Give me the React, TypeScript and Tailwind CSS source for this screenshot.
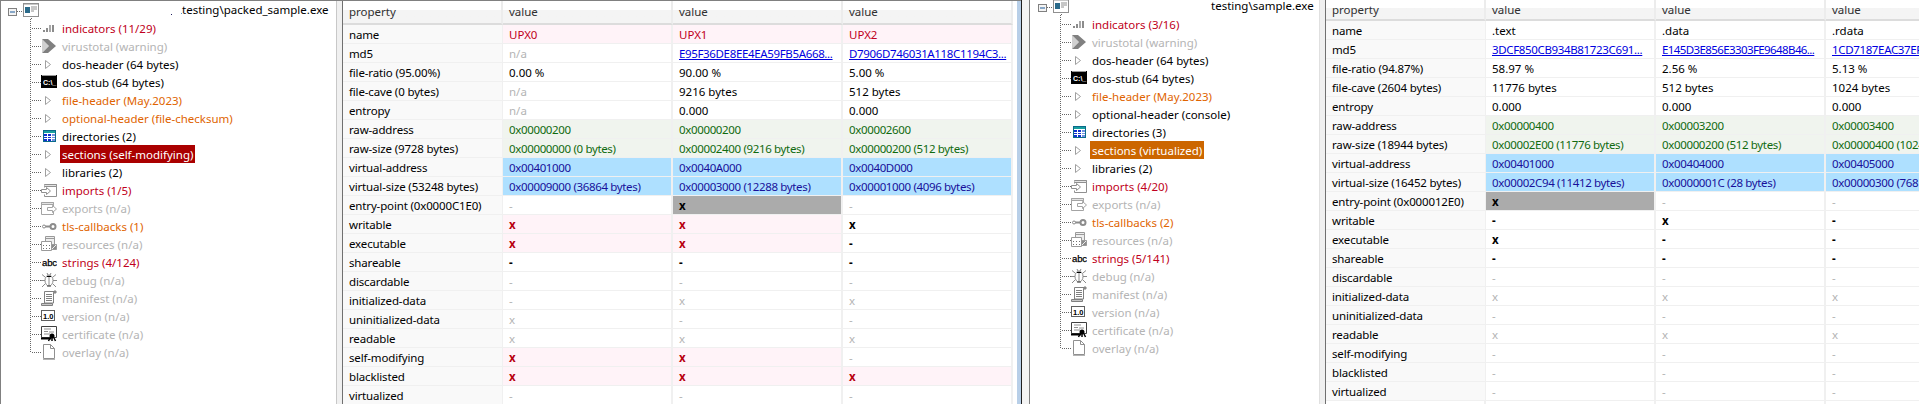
import type { ReactNode } from 'react';

type Tone = 'plain' | 'muted' | 'red' | 'orange';

const toneClass: Record<Tone, string> = {
  plain: 'text-black',
  muted: 'text-[#b4b4b4]',
  red: 'text-[#c00020]',
  orange: 'text-[#e06400]',
};

// icons, all 16x16 and drawn to sit after the dotted connector
const Bars = () => (
  <svg width="16" height="16" fill="#8c8c8c">
    <rect x="2" y="10" width="2" height="2" />
    <rect x="5" y="8" width="2" height="4" />
    <rect x="8" y="5" width="2" height="7" fill="#a8a8a8" />
    <rect x="11" y="5" width="2" height="7" />
  </svg>
);

const Virustotal = () => (
  <svg width="16" height="16">
    <polygon points="1,1 1,15 8,8" fill="#d0d0d0" />
    <polygon points="1,1 7,1 15,8 7,15 1,15 8,8" fill="#808080" />
  </svg>
);

const Arrow = () => (
  <svg width="16" height="16">
    <polygon points="4.5,4.5 9.5,8.5 4.5,12.5" fill="#fff" stroke="#a0a0a0" />
  </svg>
);

const Console = () => (
  <svg width="16" height="16">
    <rect x="0" y="1" width="16" height="13" fill="#000" />
    <rect x="1" y="1" width="14" height="1" fill="#9a9a9a" />
    <text x="2" y="11" fontSize="7" fontWeight="bold" fill="#fff" fontFamily="'Liberation Sans', sans-serif">
      C:\_
    </text>
  </svg>
);

const Directories = () => (
  <svg width="16" height="16">
    <rect x="2.5" y="2.5" width="12" height="11" fill="#fff" stroke="#0a6a8a" />
    <rect x="3" y="3" width="11" height="2" fill="#18a0a0" />
    <rect x="3" y="6" width="3" height="7" fill="#1030d0" />
    <rect x="7" y="6" width="3" height="7" fill="#1030d0" />
    <rect x="11" y="6" width="3" height="7" fill="#7090e0" />
    <path d="M3 8.5h11M3 10.5h11" stroke="#fff" />
  </svg>
);

const Imports = () => (
  <svg width="16" height="16" fill="none" stroke="#909090">
    <path d="M3.5 5.5v-3h12v12h-12v-2" />
    <path d="M3.5 2.5h12v2h-12" fill="#e4e4e4" />
    <path d="M0.5 7.5h5v-2l4 3.5-4 3.5v-2h-5z" fill="#fff" />
  </svg>
);

const Exports = () => (
  <svg width="16" height="16" fill="none" stroke="#a4a4a4">
    <path d="M0.5 2.5h12v12h-12z" fill="#fff" />
    <path d="M0.5 2.5h12v2h-12z" fill="#e4e4e4" />
    <path d="M6.5 7.5h5v-2l4 3.5-4 3.5v-2h-5z" fill="#fff" />
  </svg>
);

const Key = () => (
  <svg width="16" height="16" fill="none" stroke="#8c8c8c">
    <circle cx="12" cy="8.5" r="2.5" strokeWidth="2" />
    <path d="M2 8.5h7" strokeWidth="2" />
    <circle cx="3" cy="8.5" r="1.5" fill="#fff" />
  </svg>
);

const Resources = () => (
  <svg width="16" height="16" fill="none" stroke="#9a9a9a">
    <path d="M4.5 0.5h9v9h-9z" fill="#eee" />
    <path d="M4.5 2.5h9" />
    <path d="M0.5 5.5h10v9h-10z" fill="#fff" />
    <path d="M2 9.5h1M5 9.5h1M8 9.5h1M2 12.5h1M5 12.5h1M8 12.5h1" stroke="#707070" />
    <path d="M10.5 8.5h5v5h-5z" fill="#8c8c8c" />
    <path d="M11 13l4-4" stroke="#eee" />
  </svg>
);

const Strings = () => (
  <svg width="16" height="16">
    <text x="1" y="12" fontSize="9.5" fill="#000" stroke="#000" strokeWidth="0.25" fontFamily="'Liberation Sans', sans-serif" textLength="15">
      abc
    </text>
  </svg>
);

const Bug = () => (
  <svg width="16" height="16" fill="none" stroke="#8a8a8a">
    <ellipse cx="8" cy="8.5" rx="4" ry="5.5" fill="#fff" />
    <path d="M8 3v11M6 1l1 2M10 1L9 3M4 5L1 2.5M12 5l3-2.500M4 8.500H0M12 8.500h4M4 12l-3 3M12 12l3 3" />
    <path d="M6 4.500h4" stroke="#000" />
    <path d="M6 14h4" stroke="#444" />
  </svg>
);

const Manifest = () => (
  <svg width="16" height="16" fill="none" stroke="#808080">
    <path d="M3.500 1.500h11l-2 1v10.500h-9z" fill="#fff" />
    <path d="M0.500 13.500h11v2h-11z" fill="#c8c8c8" />
    <path d="M5 4.500h6M5 6.500h6M5 8.500h6M5 10.500h6" />
    <path d="M13 1h2v2h-2z" fill="#a0a0a0" />
  </svg>
);

const Version = () => (
  <svg width="16" height="16">
    <rect x="0.500" y="2.500" width="13" height="10" fill="#fff" stroke="#606060" />
    <text x="2" y="10.500" fontSize="7.500" fontWeight="bold" fill="#000" fontFamily="'Liberation Sans', sans-serif">
      1.0
    </text>
  </svg>
);

const Certificate = () => (
  <svg width="16" height="16" fill="none">
    <path d="M0.500 0.500h15v11h-15z" fill="#fff" stroke="#404040" />
    <path d="M3 3h7M3 5.500h4M8 6h5M3 8h6" stroke="#909090" />
    <path d="M0 12.500h10" stroke="#000" strokeWidth="2" />
    <circle cx="11" cy="10" r="2.500" fill="#000" />
    <path d="M9 12l-1.500 3M13 12l1.500 3M11 12v3" stroke="#000" strokeWidth="1.500" />
  </svg>
);

const Page = () => (
  <svg width="16" height="16" fill="none" stroke="#909090">
    <path d="M2.500 0.500h7l4 4v10h-11z" fill="#fff" />
    <path d="M9.500 0.500v4h4" />
    <path d="M2 15.500h12" stroke="#b4b4b4" />
  </svg>
);

const WindowGlyph = () => (
  <svg width="38" height="18" className="shrink-0">
    <rect x="7.500" y="7.500" width="8" height="7" fill="#f4f4f4" stroke="#808080" />
    <path d="M9 11h5" stroke="#1a5a9a" />
    <path d="M16 10.500h6" stroke="#666" strokeDasharray="1 1" />
    <path d="M30.500 15v3" stroke="#666" strokeDasharray="1 1" />
    <rect x="22.500" y="2.500" width="15" height="13" fill="#fff" stroke="#909090" />
    <rect x="24" y="6" width="5" height="6" fill="#2a6a8a" />
    <path d="M30 6h6M30 8h6M30 10h3" stroke="#909090" />
    <path d="M23 3.500h14" stroke="#c8c8c8" />
  </svg>
);

type Node = { label: string; tone: Tone; icon: ReactNode; picked?: string };

const TreeRow = ({ node, last }: { node: Node; last: boolean }) => (
  <div className="flex h-[18px] items-center pl-[29px]">
    <svg width="11" height="18" className="shrink-0">
      <path d={last ? 'M0.500 0v9.500' : 'M0.500 0v18'} stroke="#666" strokeDasharray="1 1" />
      <path d="M2 9.500h9" stroke="#666" strokeDasharray="1 1" />
    </svg>
    <span className="w-[19px] shrink-0">{node.icon}</span>
    <span className={`px-[2px] pt-[2px] leading-[16px] whitespace-nowrap ${node.picked ? node.picked + ' text-white' : toneClass[node.tone]}`}>
      {node.label}
    </span>
  </div>
);

const TreeView = ({ title, specks, nodes, className }: { title: string; specks?: boolean; nodes: Node[]; className: string }) => (
  <div className={`shrink-0 overflow-hidden bg-white ${className}`}>
    <div className="flex h-[18px] items-center">
      <WindowGlyph />
      {specks ? (
        <span className="ml-[132px] flex items-center">
          <span className="mt-[9px] h-[1px] w-[1px] bg-[#202060]" />
          <span className="mt-[7px] ml-[9px] h-[1px] w-[1px] bg-[#5090d0]" />
        </span>
      ) : (
        <span className="ml-[142px]" />
      )}
      <span className="whitespace-nowrap text-black">{title}</span>
    </div>
    {nodes.map((node, i) => (
      <TreeRow key={node.label} node={node} last={i === nodes.length - 1} />
    ))}
  </div>
);

type CellKind = 'plain' | 'muted' | 'bad' | 'link' | 'linkTight' | 'raw' | 'virt' | 'flagBad' | 'flagGray' | 'flagBlack' | 'dash' | 'faint';

const cellClass: Record<CellKind, string> = {
  plain: 'text-black',
  muted: 'text-[#b4b4b4]',
  bad: 'bg-[#fff3f8] text-[#c00020]',
  link: 'text-[#0000e0] underline tracking-[-0.35px]',
  linkTight: 'text-[#0000e0] underline tracking-[-0.6px]',
  raw: 'bg-[#f0f4ee] text-[#106a10] tracking-[-0.35px]',
  virt: 'bg-[#aee0ff] text-[#18109a] tracking-[-0.35px]',
  flagBad: 'bg-[#fff3f8] font-bold text-[#b80010]',
  flagGray: 'bg-[#ababab] font-bold text-black',
  flagBlack: 'font-bold text-black',
  dash: 'font-bold text-black',
  faint: 'text-[#b4b4b4]',
};

type Row = { prop: string; cells: [string, CellKind][] };

const same = (text: string, kind: CellKind): [string, CellKind][] => [
  [text, kind],
  [text, kind],
  [text, kind],
];

const Grid = ({ rows, headClass, tail }: { rows: Row[]; headClass: string; tail?: boolean }) => (
  <div className="grid w-max grid-cols-[160px_170px_170px_170px]">
    {['property', 'value', 'value', 'value'].map((head, i) => (
      <div
        key={i}
        className={`flex items-center border-r-2 border-b-2 border-r-[#ececec] border-b-[#dcdcdc] bg-gradient-to-b from-white from-40% to-[#f4f4f4] to-40% px-[6px] text-[#303030] ${headClass}`}
      >
        {head}
      </div>
    ))}
    {rows.map((row) => (
      <div key={row.prop} className="contents">
        <div className="flex h-[19px] items-center border-r border-b border-[#f0f0f0] bg-[#f9f9f9] px-[6px] pt-[2px] tracking-[-0.15px] whitespace-nowrap text-black">
          {row.prop}
        </div>
        {row.cells.map(([text, kind], i) => (
          <div
            key={i}
            className={`flex h-[19px] items-center overflow-hidden border-r-2 border-b border-[#f0f0f0] pt-[2px] pl-[6px] whitespace-nowrap ${cellClass[kind]}`}
          >
            {text}
          </div>
        ))}
      </div>
    ))}
    {tail &&
      [0, 1, 2, 3].map((i) => <div key={i} className="h-[3px] border-r-2 border-[#f0f0f0] first:bg-[#f9f9f9]" />)}
  </div>
);

const treeBase = (imports: string, indicators: string, tls: string, strings: string, dirs: string, libs: string): Node[] => [
  { label: indicators, tone: 'red', icon: <Bars /> },
  { label: 'virustotal (warning)', tone: 'muted', icon: <Virustotal /> },
  { label: 'dos-header (64 bytes)', tone: 'plain', icon: <Arrow /> },
  { label: 'dos-stub (64 bytes)', tone: 'plain', icon: <Console /> },
  { label: 'file-header (May.2023)', tone: 'orange', icon: <Arrow /> },
  { label: 'optional', tone: 'plain', icon: <Arrow /> },
  { label: dirs, tone: 'plain', icon: <Directories /> },
  { label: 'sections', tone: 'plain', icon: <Arrow /> },
  { label: libs, tone: 'plain', icon: <Arrow /> },
  { label: imports, tone: 'red', icon: <Imports /> },
  { label: 'exports (n/a)', tone: 'muted', icon: <Exports /> },
  { label: tls, tone: 'orange', icon: <Key /> },
  { label: 'resources (n/a)', tone: 'muted', icon: <Resources /> },
  { label: strings, tone: 'red', icon: <Strings /> },
  { label: 'debug (n/a)', tone: 'muted', icon: <Bug /> },
  { label: 'manifest (n/a)', tone: 'muted', icon: <Manifest /> },
  { label: 'version (n/a)', tone: 'muted', icon: <Version /> },
  { label: 'certificate (n/a)', tone: 'muted', icon: <Certificate /> },
  { label: 'overlay (n/a)', tone: 'muted', icon: <Page /> },
];

const packedTree = treeBase('imports (1/5)', 'indicators (11/29)', 'tls-callbacks (1)', 'strings (4/124)', 'directories (2)', 'libraries (2)').map((n) => {
  if (n.label === 'optional') return { ...n, label: 'optional-header (file-checksum)', tone: 'orange' as Tone };
  if (n.label === 'sections') return { ...n, label: 'sections (self-modifying)', picked: 'bg-[#aa0000]' };
  return n;
});

const plainTree = treeBase('imports (4/20)', 'indicators (3/16)', 'tls-callbacks (2)', 'strings (5/141)', 'directories (3)', 'libraries (2)').map((n) => {
  if (n.label === 'optional') return { ...n, label: 'optional-header (console)' };
  if (n.label === 'sections') return { ...n, label: 'sections (virtualized)', picked: 'bg-[#cc6600]' };
  return n;
});

const packedRows: Row[] = [
  { prop: 'name', cells: [['UPX0', 'bad'], ['UPX1', 'bad'], ['UPX2', 'bad']] },
  { prop: 'md5', cells: [['n/a', 'muted'], ['E95F36DE8EE4EA59FB5A668...', 'link'], ['D7906D746031A118C1194C3...', 'link']] },
  { prop: 'file-ratio (95.00%)', cells: [['0.00 %', 'plain'], ['90.00 %', 'plain'], ['5.00 %', 'plain']] },
  { prop: 'file-cave (0 bytes)', cells: [['n/a', 'muted'], ['9216 bytes', 'plain'], ['512 bytes', 'plain']] },
  { prop: 'entropy', cells: [['n/a', 'muted'], ['0.000', 'plain'], ['0.000', 'plain']] },
  { prop: 'raw-address', cells: [['0x00000200', 'raw'], ['0x00000200', 'raw'], ['0x00002600', 'raw']] },
  { prop: 'raw-size (9728 bytes)', cells: [['0x00000000 (0 bytes)', 'raw'], ['0x00002400 (9216 bytes)', 'raw'], ['0x00000200 (512 bytes)', 'raw']] },
  { prop: 'virtual-address', cells: [['0x00401000', 'virt'], ['0x0040A000', 'virt'], ['0x0040D000', 'virt']] },
  { prop: 'virtual-size (53248 bytes)', cells: [['0x00009000 (36864 bytes)', 'virt'], ['0x00003000 (12288 bytes)', 'virt'], ['0x00001000 (4096 bytes)', 'virt']] },
  { prop: 'entry-point (0x0000C1E0)', cells: [['-', 'faint'], ['x', 'flagGray'], ['-', 'faint']] },
  { prop: 'writable', cells: [['x', 'flagBad'], ['x', 'flagBad'], ['x', 'flagBlack']] },
  { prop: 'executable', cells: [['x', 'flagBad'], ['x', 'flagBad'], ['-', 'dash']] },
  { prop: 'shareable', cells: same('-', 'dash') },
  { prop: 'discardable', cells: same('-', 'faint') },
  { prop: 'initialized-data', cells: [['-', 'faint'], ['x', 'faint'], ['x', 'faint']] },
  { prop: 'uninitialized-data', cells: [['x', 'faint'], ['-', 'faint'], ['-', 'faint']] },
  { prop: 'readable', cells: same('x', 'faint') },
  { prop: 'self-modifying', cells: [['x', 'flagBad'], ['x', 'flagBad'], ['-', 'faint']] },
  { prop: 'blacklisted', cells: same('x', 'flagBad') },
  { prop: 'virtualized', cells: same('-', 'faint') },
];

const plainRows: Row[] = [
  { prop: 'name', cells: [['.text', 'plain'], ['.data', 'plain'], ['.rdata', 'plain']] },
  { prop: 'md5', cells: [['3DCF850CB934B81723C691...', 'link'], ['E145D3E856E3303FE9648B46...', 'linkTight'], ['1CD7187EAC37EF9A04B17D...', 'link']] },
  { prop: 'file-ratio (94.87%)', cells: [['58.97 %', 'plain'], ['2.56 %', 'plain'], ['5.13 %', 'plain']] },
  { prop: 'file-cave (2604 bytes)', cells: [['11776 bytes', 'plain'], ['512 bytes', 'plain'], ['1024 bytes', 'plain']] },
  { prop: 'entropy', cells: same('0.000', 'plain') },
  { prop: 'raw-address', cells: [['0x00000400', 'raw'], ['0x00003200', 'raw'], ['0x00003400', 'raw']] },
  { prop: 'raw-size (18944 bytes)', cells: [['0x00002E00 (11776 bytes)', 'raw'], ['0x00000200 (512 bytes)', 'raw'], ['0x00000400 (1024 bytes)', 'raw']] },
  { prop: 'virtual-address', cells: [['0x00401000', 'virt'], ['0x00404000', 'virt'], ['0x00405000', 'virt']] },
  { prop: 'virtual-size (16452 bytes)', cells: [['0x00002C94 (11412 bytes)', 'virt'], ['0x0000001C (28 bytes)', 'virt'], ['0x00000300 (768 bytes)', 'virt']] },
  { prop: 'entry-point (0x000012E0)', cells: [['x', 'flagGray'], ['-', 'faint'], ['-', 'faint']] },
  { prop: 'writable', cells: [['-', 'dash'], ['x', 'flagBlack'], ['-', 'dash']] },
  { prop: 'executable', cells: [['x', 'flagBlack'], ['-', 'dash'], ['-', 'dash']] },
  { prop: 'shareable', cells: same('-', 'dash') },
  { prop: 'discardable', cells: same('-', 'faint') },
  { prop: 'initialized-data', cells: same('x', 'faint') },
  { prop: 'uninitialized-data', cells: same('-', 'faint') },
  { prop: 'readable', cells: same('x', 'faint') },
  { prop: 'self-modifying', cells: same('-', 'faint') },
  { prop: 'blacklisted', cells: same('-', 'faint') },
  { prop: 'virtualized', cells: same('-', 'faint') },
];

export default function App() {
  return (
    <div className="flex h-[404px] w-[1919px] overflow-hidden bg-white font-['Noto_Sans',sans-serif] text-[11.5px]">
      <div className="flex w-[1021px] shrink-0 border-t border-[#808080]">
        <TreeView title="testing\packed_sample.exe" specks nodes={packedTree} className="w-[336px] border-l border-[#808080]" />
        <div className="w-[6px] shrink-0 border-l border-[#c8c8c8] bg-[#f0f0f0]" />
        <div className="w-[672px] shrink-0 overflow-hidden border-l border-[#707070]">
          <Grid rows={packedRows} headClass="h-[24px]" />
        </div>
        <div className="w-[3px] shrink-0 bg-white" />
        <div className="w-[4px] shrink-0 bg-[#b8cfe8]" />
      </div>
      <div className="w-[1px] shrink-0 bg-[#202020]" />
      <div className="w-[7px] shrink-0 bg-[#f4f4f4]" />
      <div className="w-[1px] shrink-0 bg-[#808080]" />
      <TreeView title="testing\sample.exe" nodes={plainTree} className="-mt-[3px] w-[289px] border-l border-white" />
      <div className="w-[6px] shrink-0 border-l border-[#e0e0e0] bg-[#f0f0f0]" />
      <div className="min-w-0 flex-1 overflow-hidden border-l border-[#707070]">
        <Grid rows={plainRows} headClass="h-[21px]" tail />
      </div>
    </div>
  );
}
